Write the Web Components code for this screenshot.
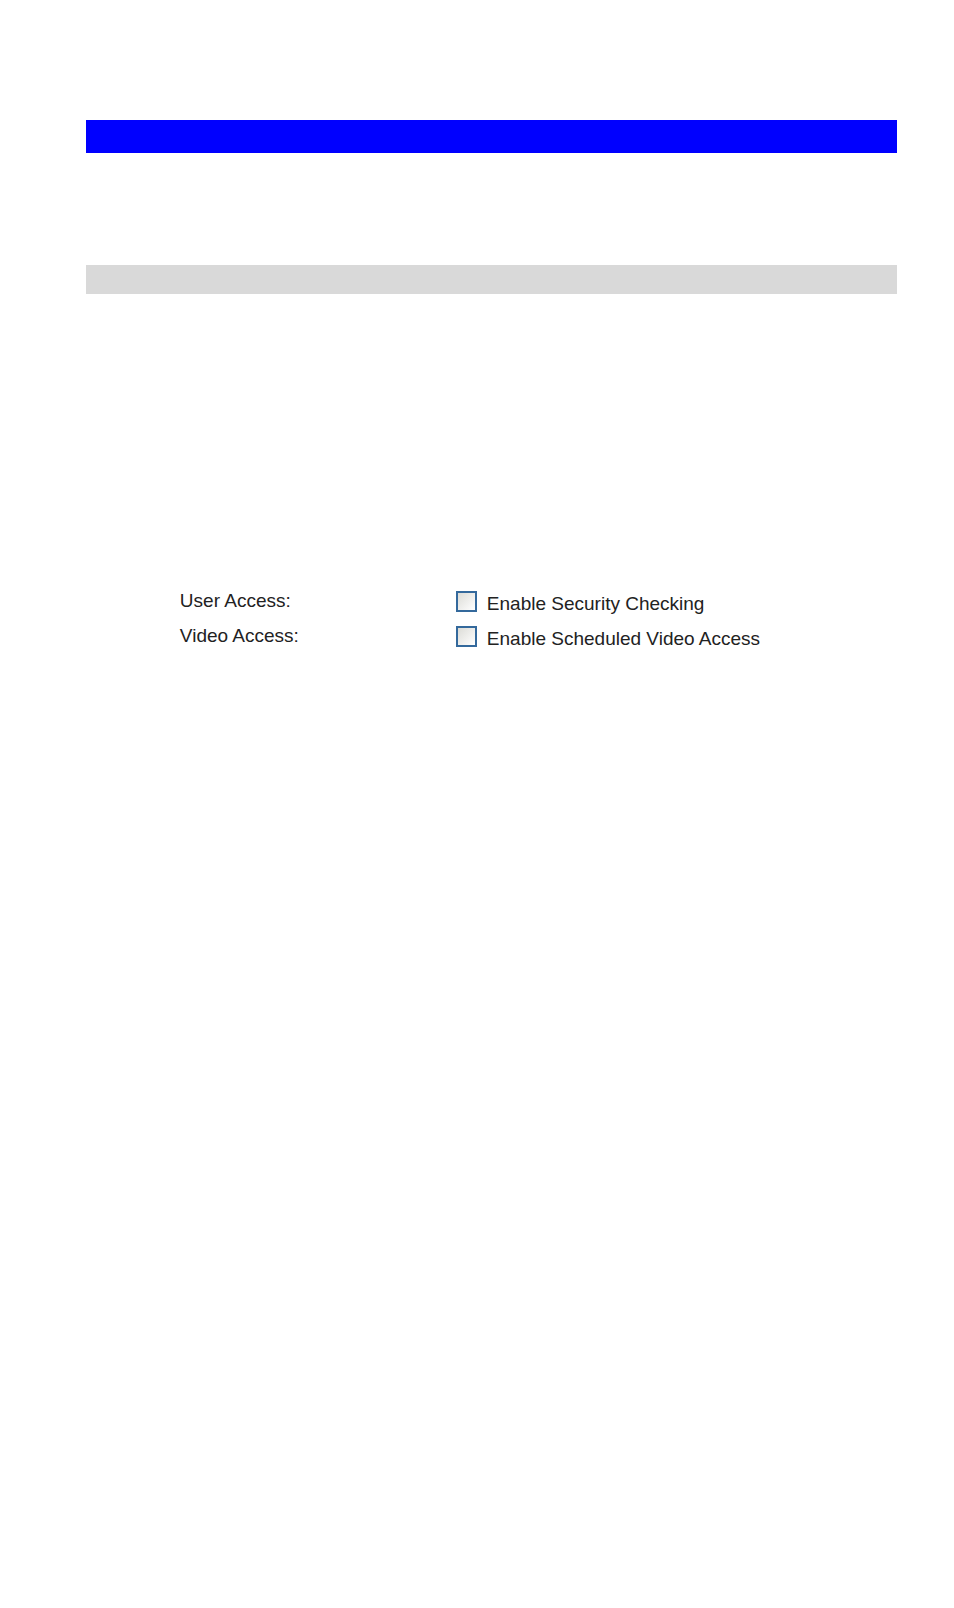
<!DOCTYPE html>
<html lang="en">
<head>
<meta charset="utf-8">
<title>Security</title>
<style>
  body {
    margin: 0;
    background: #fff;
    color: #222;
    font-family: "Liberation Sans", Arial, sans-serif;
    font-size: 19px;
    line-height: 24px;
  }
</style>
</head>
<body>
<manual-page>
  <heading-bar></heading-bar>
  <heading-bar level="section"></heading-bar>
  <access-settings>
    <access-option name="security" label="User Access:">Enable Security Checking</access-option>
    <access-option name="schedule" label="Video Access:">Enable Scheduled Video Access</access-option>
  </access-settings>
</manual-page>

<script>
class ManualPage extends HTMLElement {
  connectedCallback() {
    const shadow = this.attachShadow({ mode: "open" });
    shadow.innerHTML = `
      <style>
        :host {
          display: block;
          box-sizing: border-box;
          min-height: 100vh;
          padding: 120px 6% 80px 9%;
        }
      </style>
      <slot></slot>
    `;
  }
}

class HeadingBar extends HTMLElement {
  connectedCallback() {
    const shadow = this.attachShadow({ mode: "open" });
    shadow.innerHTML = `
      <style>
        :host {
          display: block;
          height: 33px;
          background: #00f;
        }
        :host([level="section"]) {
          height: 29px;
          margin-top: 112px;
          background: #d9d9d9;
        }
      </style>
    `;
  }
}

class AccessSettings extends HTMLElement {
  connectedCallback() {
    const shadow = this.attachShadow({ mode: "open" });
    shadow.innerHTML = `
      <style>
        :host {
          display: grid;
          row-gap: 8px;
          margin-top: 295px;
          padding-left: 94px;
        }
      </style>
      <slot></slot>
    `;
  }
}

class AccessOption extends HTMLElement {
  connectedCallback() {
    const shadow = this.attachShadow({ mode: "open" });
    const name = this.getAttribute("name");
    shadow.innerHTML = `
      <style>
        :host {
          display: block;
        }
        .row {
          display: grid;
          grid-template-columns: 276px 1fr;
          align-items: start;
        }
        .option {
          display: flex;
          align-items: flex-start;
          gap: 10px;
        }
        .option label {
          padding-top: 3px;
        }
        input {
          appearance: none;
          box-sizing: border-box;
          flex: none;
          width: 21px;
          height: 21px;
          margin: 2px 0 0;
          border: 2px solid #34699c;
          background: linear-gradient(135deg, #dcdcd7, #fff);
        }
        input:checked {
          background: #34699c;
        }
      </style>
      <div class="row" role="group" aria-labelledby="title">
        <span id="title">${this.getAttribute("label")}</span>
        <div class="option">
          <input type="checkbox" id="${name}" name="${name}">
          <label for="${name}"><slot></slot></label>
        </div>
      </div>
    `;
  }
}

customElements.define("manual-page", ManualPage);
customElements.define("heading-bar", HeadingBar);
customElements.define("access-settings", AccessSettings);
customElements.define("access-option", AccessOption);
</script>
</body>
</html>
